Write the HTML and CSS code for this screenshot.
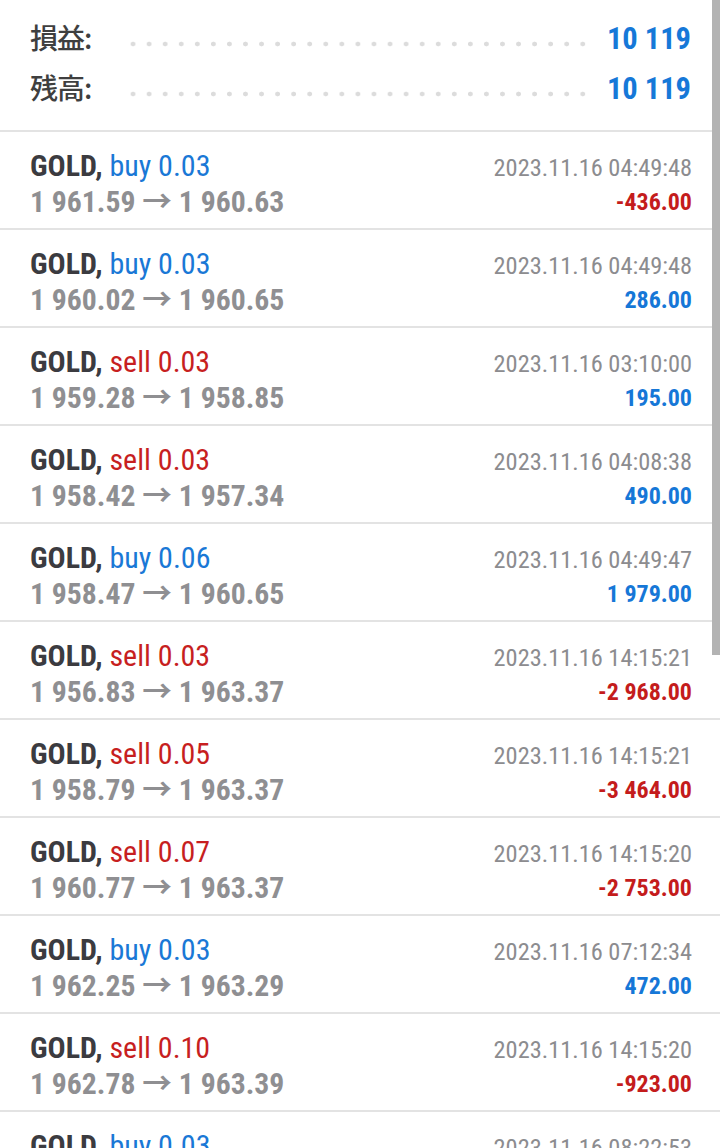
FILE: index.html
```html
<!DOCTYPE html>
<html lang="ja">
<head>
<meta charset="utf-8">
<link rel="stylesheet" href="styles.css">
</head>
<body>
<div class="screen">
  <section class="summary">
    <div class="sum-row"><span class="sum-label">損益:</span><span class="dots"></span><span class="sum-value">10 119</span></div>
    <div class="sum-row"><span class="sum-label">残高:</span><span class="dots"></span><span class="sum-value">10 119</span></div>
  </section>
  <ul class="deals">
    <li class="deal"><div class="left"><div class="title"><b>GOLD,</b> <span class="buy">buy 0.03</span></div><div class="prices">1 961.59 → 1 960.63</div></div><div class="right"><div class="time">2023.11.16 04:49:48</div><div class="profit neg">-436.00</div></div></li>
    <li class="deal"><div class="left"><div class="title"><b>GOLD,</b> <span class="buy">buy 0.03</span></div><div class="prices">1 960.02 → 1 960.65</div></div><div class="right"><div class="time">2023.11.16 04:49:48</div><div class="profit pos">286.00</div></div></li>
    <li class="deal"><div class="left"><div class="title"><b>GOLD,</b> <span class="sell">sell 0.03</span></div><div class="prices">1 959.28 → 1 958.85</div></div><div class="right"><div class="time">2023.11.16 03:10:00</div><div class="profit pos">195.00</div></div></li>
    <li class="deal"><div class="left"><div class="title"><b>GOLD,</b> <span class="sell">sell 0.03</span></div><div class="prices">1 958.42 → 1 957.34</div></div><div class="right"><div class="time">2023.11.16 04:08:38</div><div class="profit pos">490.00</div></div></li>
    <li class="deal"><div class="left"><div class="title"><b>GOLD,</b> <span class="buy">buy 0.06</span></div><div class="prices">1 958.47 → 1 960.65</div></div><div class="right"><div class="time">2023.11.16 04:49:47</div><div class="profit pos">1 979.00</div></div></li>
    <li class="deal"><div class="left"><div class="title"><b>GOLD,</b> <span class="sell">sell 0.03</span></div><div class="prices">1 956.83 → 1 963.37</div></div><div class="right"><div class="time">2023.11.16 14:15:21</div><div class="profit neg">-2 968.00</div></div></li>
    <li class="deal"><div class="left"><div class="title"><b>GOLD,</b> <span class="sell">sell 0.05</span></div><div class="prices">1 958.79 → 1 963.37</div></div><div class="right"><div class="time">2023.11.16 14:15:21</div><div class="profit neg">-3 464.00</div></div></li>
    <li class="deal"><div class="left"><div class="title"><b>GOLD,</b> <span class="sell">sell 0.07</span></div><div class="prices">1 960.77 → 1 963.37</div></div><div class="right"><div class="time">2023.11.16 14:15:20</div><div class="profit neg">-2 753.00</div></div></li>
    <li class="deal"><div class="left"><div class="title"><b>GOLD,</b> <span class="buy">buy 0.03</span></div><div class="prices">1 962.25 → 1 963.29</div></div><div class="right"><div class="time">2023.11.16 07:12:34</div><div class="profit pos">472.00</div></div></li>
    <li class="deal"><div class="left"><div class="title"><b>GOLD,</b> <span class="sell">sell 0.10</span></div><div class="prices">1 962.78 → 1 963.39</div></div><div class="right"><div class="time">2023.11.16 14:15:20</div><div class="profit neg">-923.00</div></div></li>
    <li class="deal"><div class="left"><div class="title"><b>GOLD,</b> <span class="buy">buy 0.03</span></div><div class="prices">1 962.51 → 1 963.29</div></div><div class="right"><div class="time">2023.11.16 08:22:53</div><div class="profit pos">0.00</div></div></li>
  </ul>
  <div class="scrollbar"></div>
</div>
</body>
</html>
```
FILE: styles.css
```css
html, body {
  margin: 0;
  padding: 0;
  background: #ffffff;
  overflow: hidden;
}
.screen {
  position: relative;
  width: 720px;
  height: 1148px;
  overflow: hidden;
  font-family: "Roboto Condensed", Roboto, "Noto Sans CJK JP", sans-serif;
}
.summary {
  box-sizing: content-box;
  padding: 13px 28px 0 30px;
  height: 117px;
  border-bottom: 2px solid #e3e3e3;
  display: flex;
  flex-direction: column;
}
.sum-row {
  display: flex;
  align-items: center;
  height: 50px;
}
.sum-label {
  font-family: "Noto Sans CJK JP", sans-serif;
  font-size: 28px;
  font-weight: 500;
  color: #3f3f3f;
  width: 95px;
  letter-spacing: -1px;
  margin-top: -3px;
}
.dots {
  flex: 1;
  align-self: stretch;
  margin-right: 16px;
  background-image: radial-gradient(circle, #dcdcdc 2.1px, transparent 2.7px);
  background-size: 16.07px 8px;
  background-repeat: repeat-x;
  background-position: 0 27px;
}
.sum-value {
  font-size: 30.5px;
  font-weight: 700;
  color: #1678d8;
  margin-right: 1px;
}
.deals {
  list-style: none;
  margin: 0;
  padding: 0;
}
.deal {
  display: flex;
  justify-content: space-between;
  height: 98px;
  box-sizing: border-box;
  padding: 16.5px 28px 0 30px;
  border-bottom: 2px solid #e3e3e3;
}
.left, .right {
  display: flex;
  flex-direction: column;
}
.right {
  align-items: flex-end;
}
.title {
  font-size: 30px;
  line-height: 34px;
  color: #3b3b40;
  white-space: nowrap;
}
.title b {
  font-weight: 700;
}
.buy { color: #1a78d6; }
.sell { color: #c71f1f; }
.prices {
  font-size: 29.7px;
  line-height: 37px;
  font-weight: 700;
  color: #8f8f92;
  white-space: nowrap;
}
.time {
  font-size: 24.4px;
  line-height: 34px;
  color: #8c8c8f;
  padding-top: 2.5px;
  white-space: nowrap;
}
.profit {
  font-size: 24px;
  line-height: 34px;
  font-weight: 700;
  white-space: nowrap;
}
.profit.neg { color: #c41c1c; }
.profit.pos { color: #1677d7; }
.scrollbar {
  position: absolute;
  top: 0;
  right: 0;
  width: 8px;
  height: 655px;
  background: #b3b3b3;
}
```
